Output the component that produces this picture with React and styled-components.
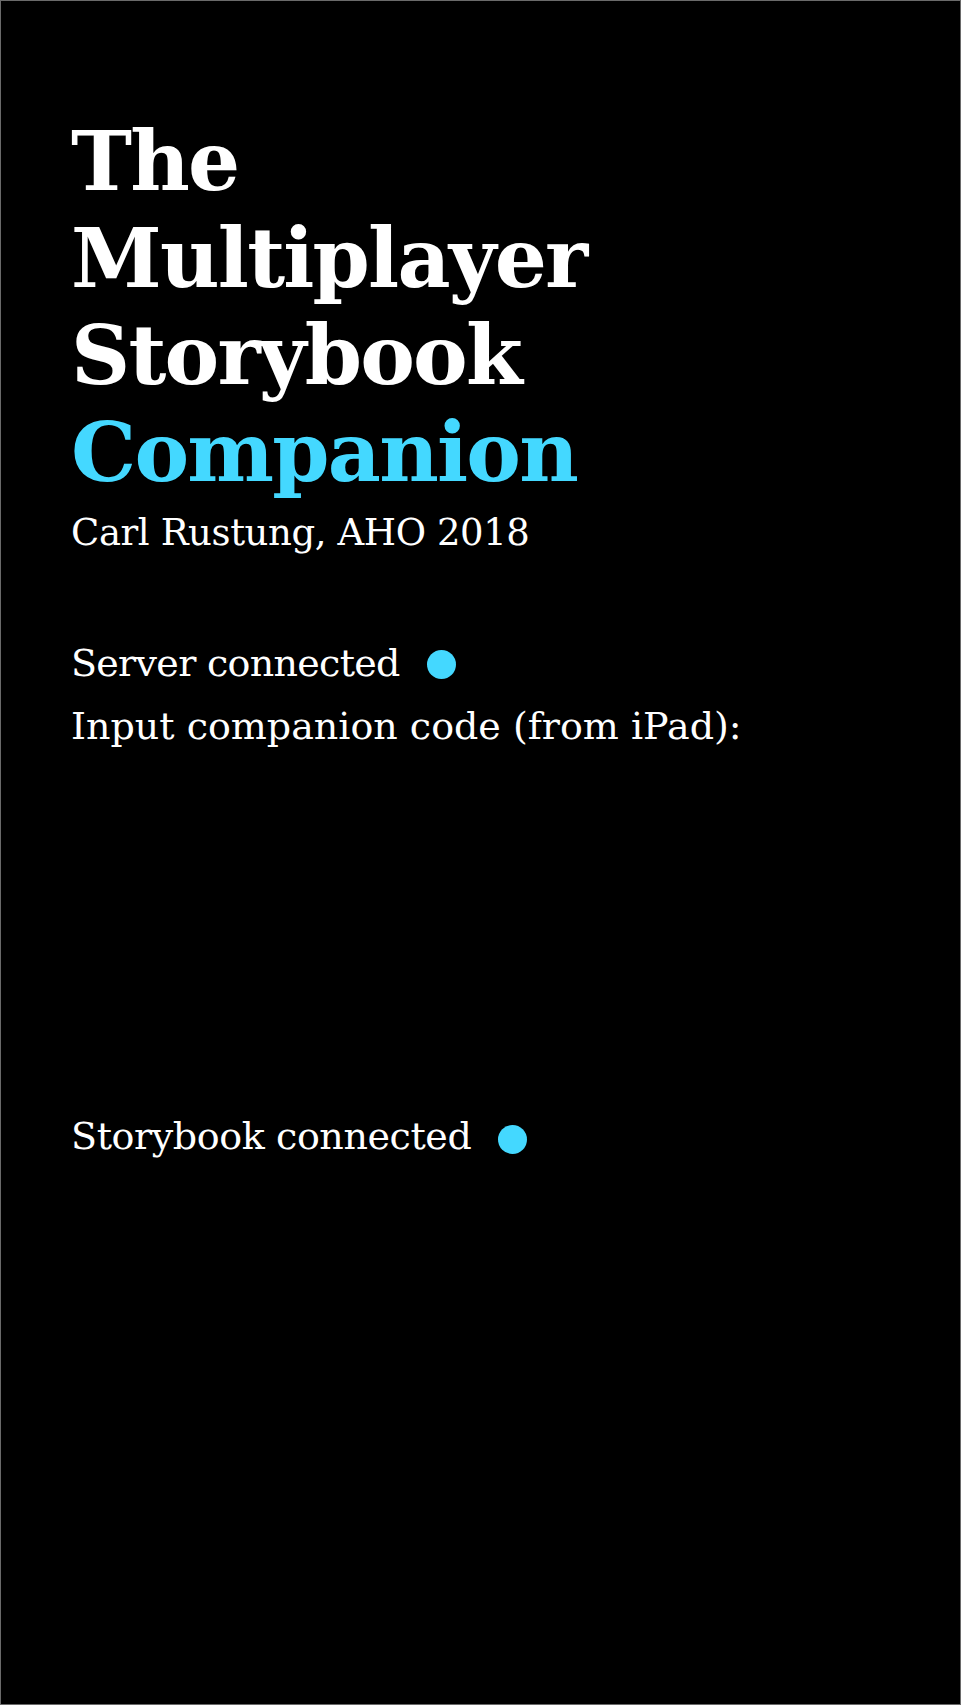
import React from 'react';
import styled, { createGlobalStyle } from 'styled-components';

const GlobalStyle = createGlobalStyle`
  html, body {
    margin: 0;
    padding: 0;
    background: #000;
  }
  * {
    box-sizing: border-box;
  }
`;

const Page = styled.div`
  width: 961px;
  height: 1705px;
  background: #000;
  border: 1px solid #6a6a6a;
  padding: 112px 0 0 70px;
  color: #fff;
  font-family: "DejaVu Serif", "Liberation Serif", serif;
`;

const Title = styled.h1`
  margin: 0;
  font-family: "DejaVu Serif", "Liberation Serif", serif;
  font-weight: 700;
  font-size: 82px;
  line-height: 97px;
  letter-spacing: -1.8px;
  color: #fff;
`;

const Line = styled.span`
  display: block;
  color: ${p => (p.accent ? '#44d8ff' : '#fff')};
`;

const Text = styled.p`
  margin: 0;
  font-size: ${p => p.size || 38}px;
  line-height: 63px;
  letter-spacing: ${p => p.spacing ?? -0.4}px;
  font-weight: 400;
`;

const Status = styled.div`
  display: flex;
  align-items: center;
  gap: 27px;
  margin-top: ${p => p.gap || 0}px;
`;

const Dot = styled.span`
  width: 29px;
  height: 29px;
  border-radius: 50%;
  background: #44d8ff;
  flex: none;
  margin-top: ${p => p.drop ?? 4}px;
`;

const CodeInput = styled.input`
  display: block;
  width: 400px;
  height: 347px;
  background: #000;
  border: none;
  outline: none;
  color: #fff;
  font: inherit;
  font-size: 38px;
`;

export default function App() {
  return (
    <>
      <GlobalStyle />
      <Page>
        <Title>
          <Line>The</Line>
          <Line>Multiplayer</Line>
          <Line>Storybook</Line>
          <Line accent>Companion</Line>
        </Title>
        <Text size={37}>Carl Rustung, AHO 2018</Text>
        <Status gap={68}>
          <Text spacing={-0.7}>Server connected</Text>
          <Dot drop={2} />
        </Status>
        <Text spacing={0}>Input companion code (from iPad):</Text>
        <CodeInput aria-label="companion code" />
        <Status>
          <Text>Storybook connected</Text>
          <Dot drop={6} />
        </Status>
      </Page>
    </>
  );
}
